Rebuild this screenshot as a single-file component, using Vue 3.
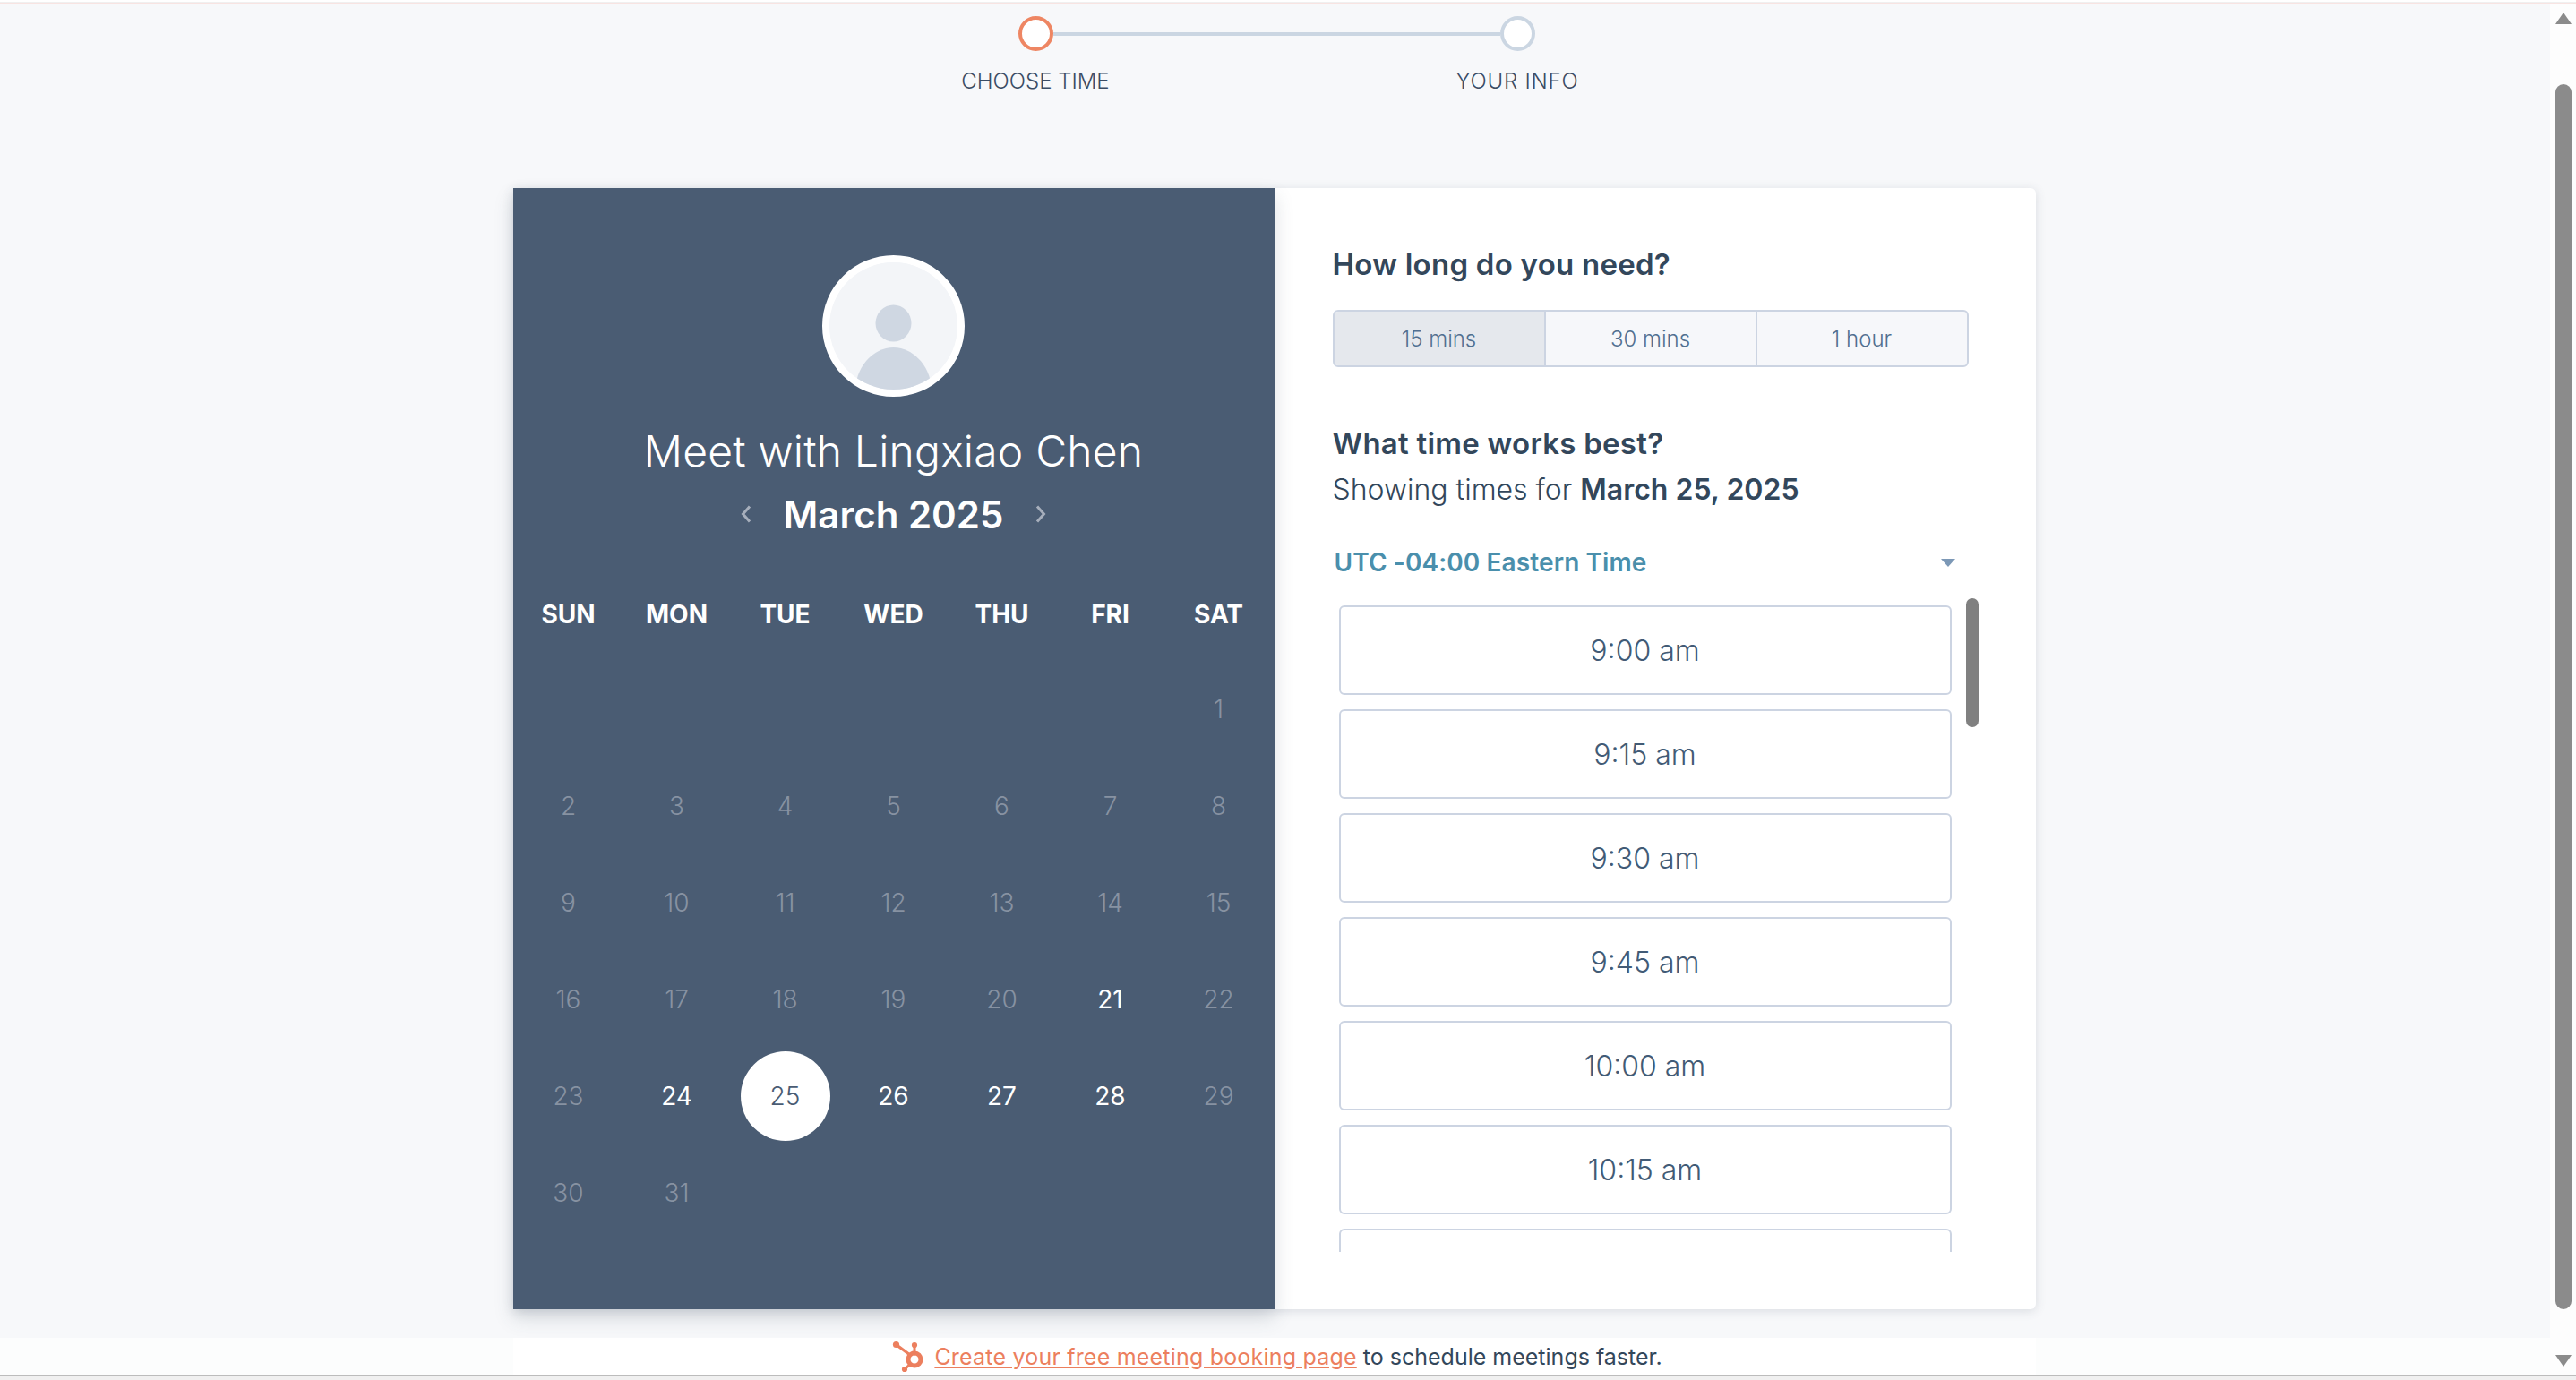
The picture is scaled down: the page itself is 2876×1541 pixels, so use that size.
<script setup>
const durations = [
  { label: '15 mins', active: true },
  { label: '30 mins', active: false },
  { label: '1 hour', active: false },
]
const weekdays = ['SUN', 'MON', 'TUE', 'WED', 'THU', 'FRI', 'SAT']
const available = [21, 24, 26, 27, 28]
const days = []
for (let i = 0; i < 6; i++) days.push({ n: '', cls: 'blank' })
for (let n = 1; n <= 31; n++) {
  days.push({
    n,
    cls: n === 25 ? 'selected' : available.includes(n) ? 'open' : 'muted',
  })
}
const times = ['9:00 am', '9:15 am', '9:30 am', '9:45 am', '10:00 am', '10:15 am', '']
</script>

<template>
  <div class="window">
    <div class="top-strip"></div>
    <div class="viewport">
      <div class="page">
        <div class="stepper">
          <div class="step">
            <span class="dot current"></span>
            <span class="step-label">CHOOSE TIME</span>
          </div>
          <div class="step-line"></div>
          <div class="step">
            <span class="dot"></span>
            <span class="step-label wide">YOUR INFO</span>
          </div>
        </div>

        <div class="card">
          <section class="calendar">
            <div class="avatar">
              <svg viewBox="0 0 142 142">
                <circle cx="71" cy="71" r="71" fill="#f3f5f8" />
                <ellipse cx="71" cy="68" rx="20" ry="20.5" fill="#cfd7e2" />
                <ellipse cx="71" cy="146" rx="43" ry="51" fill="#cfd7e2" />
              </svg>
            </div>
            <h1 class="title">Meet with Lingxiao Chen</h1>
            <div class="month">
              <svg class="chev" viewBox="0 0 12 20" width="12" height="20">
                <path d="M10 1.5 2.5 10l7.5 8.5" />
              </svg>
              <span class="month-name">March 2025</span>
              <svg class="chev" viewBox="0 0 12 20" width="12" height="20">
                <path d="M2 1.5 9.5 10 2 18.5" />
              </svg>
            </div>
            <div class="weekdays">
              <span v-for="d in weekdays" :key="d">{{ d }}</span>
            </div>
            <div class="days">
              <div v-for="(d, i) in days" :key="i" class="day" :class="d.cls">
                <span>{{ d.n }}</span>
              </div>
            </div>
          </section>

          <section class="picker">
            <h2 class="heading">How long do you need?</h2>
            <div class="segments">
              <button
                v-for="d in durations"
                :key="d.label"
                class="segment"
                :class="{ active: d.active }"
              >{{ d.label }}</button>
            </div>
            <h2 class="heading second">What time works best?</h2>
            <p class="showing">Showing times for <strong>March 25, 2025</strong></p>
            <div class="zone">
              <span>UTC -04:00 Eastern Time</span>
              <svg viewBox="0 0 16 9" width="16" height="9"><path d="M0 0h16L8 9z" fill="#7c98b6" /></svg>
            </div>
            <div class="slots-wrap">
              <div class="slots">
                <button v-for="(t, i) in times" :key="i" class="slot">{{ t }}</button>
              </div>
              <div class="slots-thumb"></div>
            </div>
          </section>
        </div>

        <div class="footer">
          <div class="footer-inner">
            <svg class="sprocket" viewBox="0 0 36 36" width="36" height="36">
              <g fill="none" stroke="#ec7f5e" stroke-linecap="round">
                <circle cx="25" cy="21" r="7" stroke-width="5" />
                <path d="M4.5 4.5 20 16" stroke-width="3.4" />
                <path d="M25 5v10" stroke-width="3" />
                <path d="M14 32 20 26.5" stroke-width="3" />
              </g>
              <circle cx="4.5" cy="4.5" r="3.6" fill="#ec7f5e" />
              <circle cx="25" cy="5" r="3.1" fill="#ec7f5e" />
              <circle cx="14" cy="32" r="3.1" fill="#ec7f5e" />
            </svg>
            <a class="link">Create your free meeting booking page</a>
            <span class="rest">to schedule meetings faster.</span>
          </div>
        </div>
      </div>

      <div class="scrollbar">
        <svg viewBox="0 0 18 13" width="18" height="13"><path d="M9 0 18 13H0z" fill="#8b8b8b" /></svg>
        <div class="thumb"></div>
        <svg viewBox="0 0 18 13" width="18" height="13"><path d="M0 0h18L9 13z" fill="#8b8b8b" /></svg>
      </div>
    </div>
    <div class="bottom-strip"></div>
  </div>
</template>

<style>
html, body { margin: 0; padding: 0; overflow: hidden; background: #f0f0f0; }
</style>

<style scoped>
.window {
  width: 2876px;
  height: 1541px;
  display: flex;
  flex-direction: column;
  font-family: Inter, "Noto Sans", "Liberation Sans", sans-serif;
  color: #33475b;
  overflow: hidden;
}
.top-strip {
  flex: none;
  height: 2px;
  margin-top: 3px;
  background: #f8e4e2;
  box-shadow: 0 -3px 0 #fff;
}
.viewport {
  flex: 1;
  min-height: 0;
  display: flex;
}
.page {
  flex: 1;
  min-width: 0;
  background: #f7f8fa;
  display: flex;
  flex-direction: column;
}
.scrollbar {
  flex: none;
  width: 29px;
  box-sizing: border-box;
  padding: 9px 5px 9px 6px;
  background: #fdfdfd;
  display: flex;
  flex-direction: column;
  align-items: center;
}
.thumb {
  width: 18px;
  flex: 1;
  margin: 67px 0 51px;
  border-radius: 9px;
  background: #8b8b8b;
}
.bottom-strip {
  flex: none;
  height: 6px;
  border-top: 2px solid #bcbcbc;
  box-sizing: border-box;
  background: #f0f0f0;
}

/* stepper */
.stepper {
  flex: none;
  height: 205px;
  display: flex;
  justify-content: center;
  align-items: flex-start;
  padding: 13px 0 0 3px;
  box-sizing: border-box;
}
.step {
  width: 39px;
  display: flex;
  flex-direction: column;
  align-items: center;
}
.dot {
  width: 39px;
  height: 39px;
  box-sizing: border-box;
  border: 4px solid #cbd6e2;
  border-radius: 50%;
  background: #fff;
}
.dot.current { border-color: #ee8663; }
.step-label {
  margin-top: 20px;
  font-size: 24px;
  line-height: 28px;
  font-weight: 300;
  white-space: nowrap;
  color: #3b4c64;
}
.step-label.wide { letter-spacing: 0.8px; }
.step-line {
  width: 499px;
  height: 4px;
  margin-top: 18px;
  background: #cbd6e2;
}

/* card */
.card {
  flex: none;
  width: 1700px;
  height: 1252px;
  margin: 0 auto;
  display: flex;
  background: #fff;
  border-radius: 0 6px 6px 0;
  box-shadow: 0 2px 12px rgba(60, 75, 95, 0.16);
  transform: translateX(-1px);
}
.calendar {
  flex: none;
  width: 850px;
  box-sizing: border-box;
  padding-top: 75px;
  background: #4a5c73;
  color: #fff;
  display: flex;
  flex-direction: column;
  align-items: center;
  box-shadow: 0 10px 20px rgba(60, 75, 95, 0.18);
}
.avatar {
  width: 159px;
  height: 158px;
  box-sizing: border-box;
  border: 8px solid #fff;
  border-radius: 50%;
  overflow: hidden;
  background: #f3f5f8;
}
.avatar svg { display: block; width: 143px; height: 142px; }
.title {
  margin: 29px 0 0;
  font-size: 48px;
  line-height: 64px;
  font-weight: 300;
  letter-spacing: 0.2px;
  white-space: nowrap;
}
.month {
  margin-top: 8px;
  height: 60px;
  display: flex;
  align-items: center;
  justify-content: center;
  gap: 36px;
}
.chev { fill: none; stroke: #a7afbc; stroke-width: 3; }
.month-name {
  font-size: 42px;
  font-weight: 600;
  white-space: nowrap;
}
.weekdays {
  margin-top: 64px;
  width: 847px;
  display: grid;
  grid-template-columns: repeat(7, 121px);
  justify-items: center;
  font-size: 28px;
  line-height: 36px;
  font-weight: 700;
}
.days {
  margin-top: 34px;
  width: 847px;
  display: grid;
  grid-template-columns: repeat(7, 121px);
  grid-auto-rows: 108px;
}
.day {
  display: flex;
  align-items: center;
  justify-content: center;
  font-size: 28px;
  font-weight: 300;
}
.day.muted { color: #8792a2; }
.day.open { color: #fff; font-weight: 400; }
.day.selected span {
  width: 100px;
  height: 100px;
  border-radius: 50%;
  background: #fff;
  color: #4a5c73;
  display: flex;
  align-items: center;
  justify-content: center;
}

/* right side */
.picker {
  flex: 1;
  min-width: 0;
  box-sizing: border-box;
  padding: 63px 0 0 65px;
}
.heading {
  margin: 0;
  font-size: 33px;
  line-height: 44px;
  font-weight: 600;
  letter-spacing: 0.25px;
  color: #33475b;
}
.heading.second { margin-top: 63px; }
.segments {
  margin-top: 29px;
  width: 710px;
  height: 64px;
  box-sizing: border-box;
  display: flex;
  border: 2px solid #ccd4e2;
  border-radius: 6px;
  background: #f6f7fa;
  overflow: hidden;
}
.segment {
  flex: 1;
  padding: 0;
  border: 0;
  border-left: 2px solid #ccd4e2;
  background: none;
  font: inherit;
  font-size: 24px;
  font-weight: 300;
  color: #516f90;
}
.segment:first-child { border-left: 0; }
.segment.active { background: #e5e8ed; }
.showing {
  margin: 8px 0 0;
  font-size: 32px;
  line-height: 44px;
  font-weight: 300;
  color: #33475b;
}
.showing strong { font-weight: 600; }
.zone {
  margin: 41px 0 0 2px;
  width: 693px;
  height: 36px;
  display: flex;
  align-items: center;
  justify-content: space-between;
  font-size: 28px;
  font-weight: 600;
  letter-spacing: 0.1px;
  color: #4a8fac;
}
.slots-wrap {
  margin-top: 22px;
  width: 722px;
  height: 730px;
  overflow: hidden;
  position: relative;
}
.slots {
  padding: 8px 0 0 7px;
  display: flex;
  flex-direction: column;
  gap: 16px;
}
.slot {
  flex: none;
  width: 684px;
  height: 100px;
  box-sizing: border-box;
  padding: 0;
  border: 2px solid #ccd4e2;
  border-radius: 6px;
  background: #fff;
  font: inherit;
  font-size: 32px;
  font-weight: 300;
  color: #425b76;
}
.slots-thumb {
  position: absolute;
  top: 0;
  left: 707px;
  width: 14px;
  height: 144px;
  border-radius: 7px;
  background: #808080;
}

/* footer */
.footer {
  flex: none;
  margin-top: 32px;
  height: 41px;
  background: #fcfdfd;
}
.footer-inner {
  width: 1700px;
  height: 41px;
  box-sizing: border-box;
  padding-left: 7px;
  margin: 0 auto;
  background: #fff;
  display: flex;
  align-items: center;
  justify-content: center;
  font-size: 25px;
  font-weight: 400;
  transform: translateX(-1px);
}
.sprocket { margin-right: 11px; flex: none; }
.link {
  color: #ec7f5e;
  text-decoration: underline;
  letter-spacing: 0.2px;
  margin-right: 7px;
  white-space: nowrap;
}
.rest { white-space: nowrap; color: #33475b; }
</style>
